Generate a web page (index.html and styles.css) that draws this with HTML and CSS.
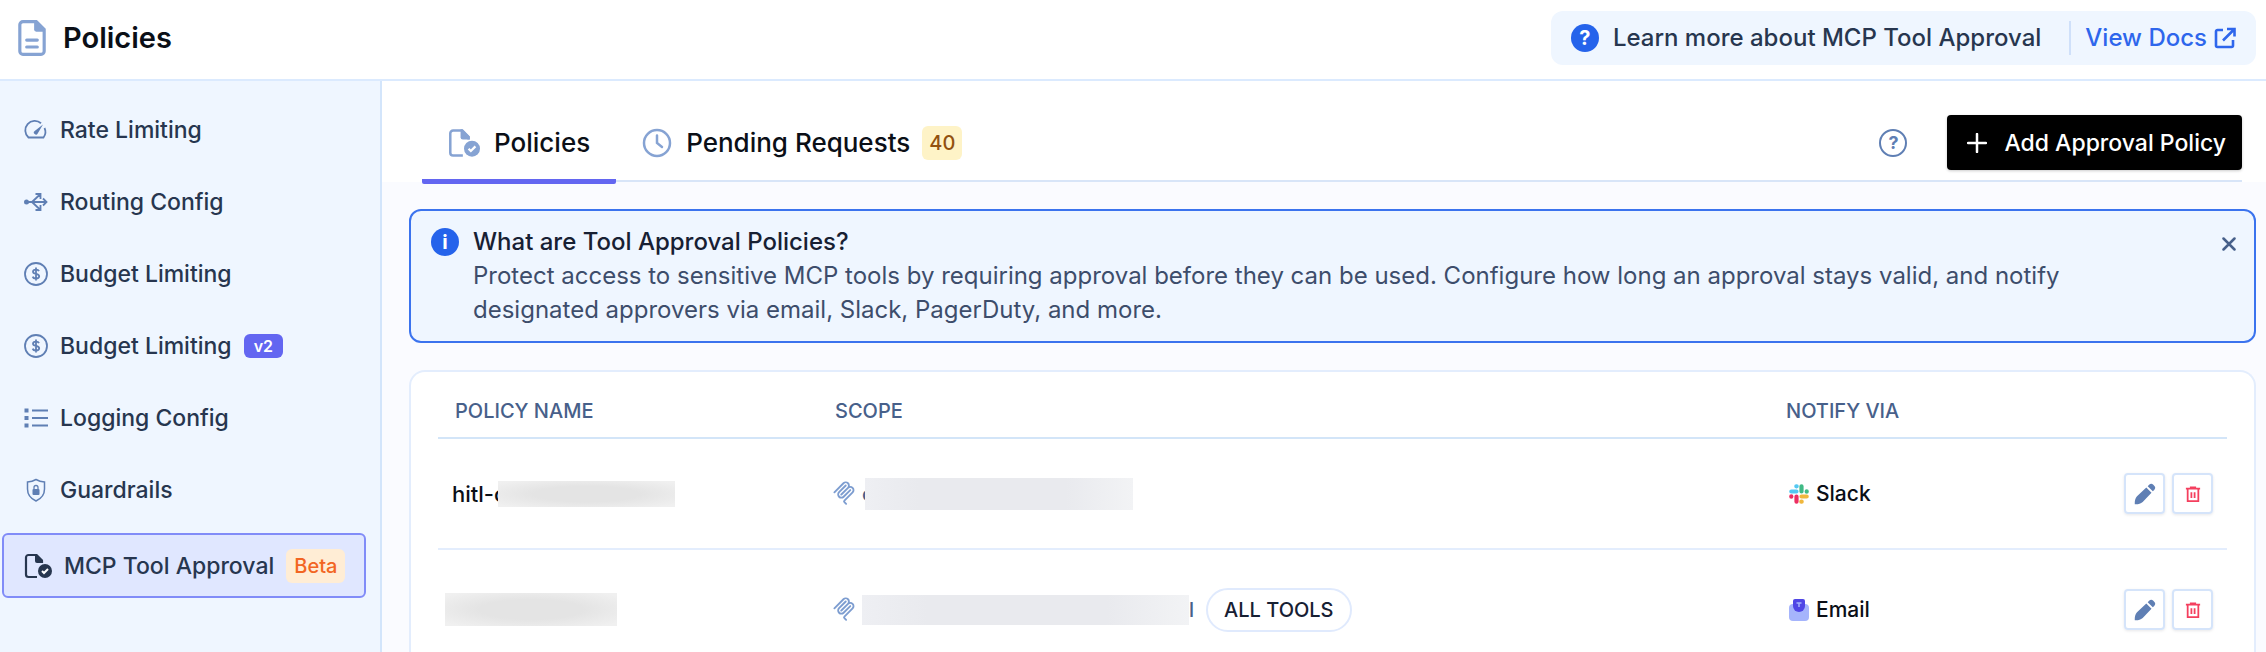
FILE: index.html
```html
<!DOCTYPE html>
<html lang="en">
<head>
    <meta charset="UTF-8">
    <meta name="viewport" content="width=device-width, initial-scale=1.0">
    <title>Policies</title>
    <link rel="stylesheet" href="styles.css">
</head>
<body>
    <!-- shared icon shapes -->
    <svg class="sprite" aria-hidden="true">
        <symbol id="doc-check" viewBox="0 0 28 26">
            <path d="M18 10V8l-6-6H4.500a2.500 2.500 0 0 0-2.500 2.500v17A2.500 2.500 0 0 0 4.500 24H13" fill="none" stroke="currentColor" stroke-width="2.200"/>
            <path d="M11 1h2l6 6v3h-6a2 2 0 0 1-2-2z" fill="currentColor"/>
            <circle cx="21" cy="18" r="7" fill="currentColor"/>
            <path class="check" d="M18 18l2 2 4-4" fill="none" stroke-width="2"/>
        </symbol>
        <symbol id="dollar" viewBox="0 0 24 24">
            <circle cx="12" cy="12" r="11" fill="none" stroke="currentColor" stroke-width="1.800"/>
            <path d="M15 9.200c-.4-1-1.500-1.600-3-1.600-1.800 0-3 .8-3 2.100 0 3 6.200 1.500 6.200 4.600 0 1.300-1.300 2.200-3.200 2.200-1.700 0-2.900-.7-3.300-1.900M12 5.500v13" fill="none" stroke="currentColor" stroke-width="1.800"/>
        </symbol>
        <symbol id="mcp" viewBox="0 0 180 195">
            <path d="M18 85L86 17c9-9 25-9 34 0s9 25 0 34L69 102M70 101l50-50c9-9 25-9 34 0l.5.5c9 9 9 25 0 34L93 147c-3 3-3 8 0 11l13 13M103 34L53 84c-9 9-9 25 0 34s25 9 34 0l50-50" fill="none" stroke="currentColor" stroke-width="14" stroke-linecap="round"/>
        </symbol>
        <symbol id="pencil" viewBox="0 0 22 22">
            <path d="M.8 21.200C.6 18.500 1 15.500 3 13.300L12.300 4.500l5.200 5.200L8.700 19c-2.200 2-5.200 2.400-7.900 2.200zM13.700 3.200l1.400-1.400a3 3 0 0 1 4.200 0l.9.9a3 3 0 0 1 0 4.200l-1.400 1.400z" fill="currentColor"/>
        </symbol>
        <symbol id="trash" viewBox="0 0 18 20">
            <path d="M1 4h16M5.500 2.500h7M3 4.500V18h12V4.500M7.200 8v6.500M10.800 8v6.500" fill="none" stroke="currentColor" stroke-width="2"/>
        </symbol>
    </svg>

    <header class="topbar">
        <h1 class="page-title">
            <svg class="title-icon" viewBox="0 0 26 34" aria-hidden="true">
                <path d="M5 1.500h12L24.500 9v20.500a3 3 0 0 1-3 3h-17a3 3 0 0 1-3-3v-25a3 3 0 0 1 3-3z" fill="none" stroke="currentColor" stroke-width="3"/>
                <path d="M15 1h3l7 7v3h-8a2 2 0 0 1-2-2z" fill="currentColor"/>
                <path d="M8 19h10M8 25.500h10" stroke="currentColor" stroke-width="3" stroke-linecap="round"/>
            </svg>
            Policies
        </h1>
        <div class="docs-banner">
            <span class="round-icon">?</span>
            <span class="docs-text">Learn more about MCP Tool Approval</span>
            <a class="docs-link" href="#">View Docs
                <svg width="22" height="22" viewBox="0 0 22 22" aria-hidden="true">
                    <path d="M9 3H3.500A1.500 1.500 0 0 0 2 4.500v14A1.500 1.500 0 0 0 3.500 20h14a1.500 1.500 0 0 0 1.500-1.500V13M13 2h7.500v7.500M20 2.500L9 13.500" fill="none" stroke="currentColor" stroke-width="2.600"/>
                </svg>
            </a>
        </div>
    </header>

    <div class="layout">
        <nav class="sidebar">
            <a class="nav-item" href="#">
                <svg width="24" height="24" viewBox="0 0 24 24" aria-hidden="true">
                    <path d="M17 5.300A9.300 9.300 0 0 0 4.500 19.500h15a9.300 9.300 0 0 0 1-9.500" fill="none" stroke="currentColor" stroke-width="1.800"/>
                    <path d="M19 6.500l-5.300 9a2 2 0 1 1-3-2.500z" fill="currentColor"/>
                </svg>
                Rate Limiting
            </a>
            <a class="nav-item" href="#">
                <svg width="24" height="24" viewBox="0 0 24 24" aria-hidden="true">
                    <circle cx="2.500" cy="12" r="2.500" fill="currentColor"/>
                    <path d="M3 12h19.500M19 8.500l3.500 3.500-3.500 3.500M8 12l8.500-8M8 12l8.500 8M11.500 4h5v5M11.500 20h5v-5" fill="none" stroke="currentColor" stroke-width="1.800"/>
                </svg>
                Routing Config
            </a>
            <a class="nav-item" href="#">
                <svg width="24" height="24" aria-hidden="true"><use href="#dollar"/></svg>
                Budget Limiting
            </a>
            <a class="nav-item" href="#">
                <svg width="24" height="24" aria-hidden="true"><use href="#dollar"/></svg>
                Budget Limiting
                <span class="tag tag-version">v2</span>
            </a>
            <a class="nav-item" href="#">
                <svg width="24" height="24" viewBox="0 0 24 24" aria-hidden="true">
                    <path d="M.5 2.500h4v4h-4zM.5 10h4v4h-4zM.5 17.500h4v4h-4z" fill="currentColor"/>
                    <path d="M8 4.500h16M8 12h16M8 19.500h16" stroke="currentColor" stroke-width="2"/>
                </svg>
                Logging Config
            </a>
            <a class="nav-item" href="#">
                <svg width="24" height="24" viewBox="0 0 24 24" aria-hidden="true">
                    <path d="M12 1.500c2.500 1.500 5 2.300 8.500 2.500v7c0 5.500-3 9.500-8.500 12-5.500-2.500-8.500-6.500-8.500-12V4C7 3.800 9.500 3 12 1.500z" fill="none" stroke="currentColor" stroke-width="1.500"/>
                    <rect x="8.500" y="11" width="7" height="6" rx="1" fill="currentColor"/>
                    <path d="M10 11V9.500a2 2 0 0 1 4 0V11" fill="none" stroke="currentColor" stroke-width="1.300"/>
                </svg>
                Guardrails
            </a>
            <a class="nav-item active" href="#">
                <svg width="28" height="26" aria-hidden="true"><use href="#doc-check"/></svg>
                MCP Tool Approval
                <span class="tag tag-beta">Beta</span>
            </a>
        </nav>

        <main class="content">
            <div class="tab-area">
                <div class="tab-row">
                    <div class="tabs" role="tablist">
                        <button class="tab selected" role="tab" aria-selected="true">
                            <svg width="32" height="30" aria-hidden="true"><use href="#doc-check"/></svg>
                            Policies
                        </button>
                        <button class="tab" role="tab" aria-selected="false">
                            <svg width="30" height="30" viewBox="0 0 30 30" aria-hidden="true">
                                <path d="M15 2a13 13 0 1 0 0 26 13 13 0 0 0 0-26zM15 7.500V15l5 4" fill="none" stroke="currentColor" stroke-width="2.500" stroke-linecap="round"/>
                            </svg>
                            Pending Requests
                            <span class="count">40</span>
                        </button>
                    </div>
                    <div class="tab-actions">
                        <button class="help" aria-label="Help">?</button>
                        <button class="add-button">
                            <svg width="20" height="20" viewBox="0 0 20 20" aria-hidden="true">
                                <path d="M10 1v18M1 10h18" stroke="currentColor" stroke-width="2.500" stroke-linecap="round"/>
                            </svg>
                            Add Approval Policy
                        </button>
                    </div>
                </div>
            </div>

            <section class="info">
                <span class="round-icon">i</span>
                <div class="info-body">
                    <h2>What are Tool Approval Policies?</h2>
                    <p>Protect access to sensitive MCP tools by requiring approval before they can be used. Configure how long an approval stays valid, and notify designated approvers via email, Slack, PagerDuty, and more.</p>
                </div>
                <button class="close" aria-label="Close">
                    <svg width="14" height="14" viewBox="0 0 14 14" aria-hidden="true">
                        <path d="M1.500 1.500l11 11M12.500 1.500l-11 11" stroke="currentColor" stroke-width="2.500" stroke-linecap="round"/>
                    </svg>
                </button>
            </section>

            <section class="card">
                <table class="policies">
                    <thead>
                        <tr>
                            <th class="col-name">Policy Name</th>
                            <th class="col-scope">Scope</th>
                            <th class="col-notify">Notify Via</th>
                            <th class="col-actions" aria-label="Actions"></th>
                        </tr>
                    </thead>
                    <tbody>
                        <tr>
                            <td>
                                <div class="cell name">hitl-c<span class="mask mask-name over"></span></div>
                            </td>
                            <td>
                                <div class="cell scope">
                                    <svg width="24" height="26" aria-hidden="true"><use href="#mcp"/></svg>
                                    c<span class="mask mask-scope over"></span>
                                </div>
                            </td>
                            <td>
                                <div class="cell notify">
                                    <svg width="20" height="20" viewBox="0 0 20 20" aria-hidden="true">
                                        <g fill="none" stroke-width="4.200" stroke-linecap="round">
                                            <path d="M2.300 7.500H7.500M7.300 2.300h.4" stroke="#53c8f2"/>
                                            <path d="M12.500 2.300V7.500M17.700 7.300v.4" stroke="#3fba85"/>
                                            <path d="M12.500 12.500h5.200M12.300 17.700h.4" stroke="#f0b73c"/>
                                            <path d="M7.500 12.500v5.200M2.300 12.300v.4" stroke="#ec2f62"/>
                                        </g>
                                    </svg>
                                    Slack
                                </div>
                            </td>
                            <td>
                                <div class="cell actions">
                                    <button class="icon-button" aria-label="Edit"><svg width="22" height="22" aria-hidden="true"><use href="#pencil"/></svg></button>
                                    <button class="icon-button delete" aria-label="Delete"><svg width="16" height="18" aria-hidden="true"><use href="#trash"/></svg></button>
                                </div>
                            </td>
                        </tr>
                        <tr>
                            <td class="flush">
                                <div class="cell name"><span class="mask mask-name tall"></span></div>
                            </td>
                            <td>
                                <div class="cell scope">
                                    <svg width="24" height="26" aria-hidden="true"><use href="#mcp"/></svg>
                                    <span class="mask mask-scope wide"></span>l
                                    <span class="pill">ALL TOOLS</span>
                                </div>
                            </td>
                            <td>
                                <div class="cell notify">
                                    <svg width="20" height="22" viewBox="0 0 20 22" aria-hidden="true">
                                        <rect y="5" width="20" height="17" rx="4" fill="#a5b4fc"/>
                                        <path d="M4 2a2 2 0 0 1 2-2h8a2 2 0 0 1 2 2v5a6 6 0 0 1-12 0z" fill="#4f46e5"/>
                                        <path d="M7.500 4h5M10 4v4" stroke="#a5b4fc" stroke-width="1.500"/>
                                    </svg>
                                    Email
                                </div>
                            </td>
                            <td>
                                <div class="cell actions">
                                    <button class="icon-button" aria-label="Edit"><svg width="22" height="22" aria-hidden="true"><use href="#pencil"/></svg></button>
                                    <button class="icon-button delete" aria-label="Delete"><svg width="16" height="18" aria-hidden="true"><use href="#trash"/></svg></button>
                                </div>
                            </td>
                        </tr>
                    </tbody>
                </table>
            </section>
        </main>
    </div>
</body>
</html>
```
FILE: styles.css
```css
* {
    box-sizing: border-box;
}

body {
    margin: 0;
    min-height: 100vh;
    display: flex;
    flex-direction: column;
    font-family: Inter, "Liberation Sans", sans-serif;
    font-size: 20px;
    font-weight: 500;
    color: #0f172a;
    background: #fff;
}

button {
    font: inherit;
    color: inherit;
    background: none;
    border: none;
    padding: 0;
    cursor: pointer;
}

svg {
    flex: none;
}

.sprite {
    position: absolute;
    width: 0;
    height: 0;
}

.check {
    stroke: #fff;
}

.topbar {
    display: flex;
    align-items: center;
    justify-content: space-between;
    height: 81px;
    padding: 0 10px 4px 18px;
    border-bottom: 2px solid #dbeafe;
}

.page-title {
    display: flex;
    align-items: center;
    gap: 17px;
    margin: 0;
    font-size: 29px;
    font-weight: 600;
    color: #0b0f17;
}

.title-icon {
    width: 28px;
    height: 36px;
    color: #86a3d3;
}

.docs-banner {
    display: flex;
    align-items: center;
    height: 54px;
    padding: 0 20px;
    border-radius: 12px;
    background: #eff6ff;
    color: #27364f;
    font-size: 24px;
}

.round-icon {
    display: grid;
    place-items: center;
    flex: none;
    width: 28px;
    height: 28px;
    border-radius: 50%;
    background: #2563eb;
    color: #fff;
    font-size: 20px;
    font-weight: 700;
    line-height: 28px;
}

.docs-text {
    margin: 0 28px 0 14px;
}

.docs-link {
    display: flex;
    align-items: center;
    gap: 7px;
    height: 34px;
    padding-left: 14px;
    border-left: 2px solid #cfe0fa;
    color: #2e66ec;
    text-decoration: none;
}

.layout {
    flex: 1;
    display: flex;
}

.sidebar {
    flex: none;
    width: 382px;
    padding: 13px 14px 40px 2px;
    border-right: 2px solid #d3e5fb;
    background: #eff6ff;
}

.nav-item {
    display: flex;
    align-items: center;
    gap: 12px;
    height: 72px;
    padding-left: 22px;
    color: #27364f;
    font-size: 23px;
    text-decoration: none;
}

.nav-item svg {
    color: #5f7fb4;
}

.nav-item.active {
    height: 65px;
    margin-top: 7px;
    padding-left: 20px;
    border: 2px solid #818cf8;
    border-radius: 6px;
    background: #e0e7ff;
}

.nav-item.active svg {
    color: #27364f;
}

.nav-item.active .check {
    stroke: #e0e7ff;
}

.tag {
    border-radius: 6px;
}

.tag-version {
    padding: 0 10px;
    background: #6366f1;
    color: #fff;
    font-size: 16px;
    font-weight: 600;
    line-height: 24px;
}

.tag-beta {
    padding: 0 8px;
    background: #ffedd5;
    color: #f26522;
    font-size: 20px;
    line-height: 34px;
}

.content {
    flex: 1;
    min-width: 0;
    background: #fafbff;
}

.tab-area {
    padding: 0 24px 0 40px;
    background: #fff;
}

.tab-row {
    display: flex;
    align-items: flex-end;
    justify-content: space-between;
    height: 101px;
    border-bottom: 2px solid #d8e5f8;
}

.tabs {
    display: flex;
    gap: 26px;
}

.tab {
    display: flex;
    align-items: center;
    gap: 14px;
    height: 80px;
    margin-bottom: -4px;
    padding-top: 2px;
    font-size: 26px;
    color: #0b0f17;
    border-bottom: 5px solid transparent;
}

.tab svg {
    color: #86a3d3;
}

.tab.selected {
    padding-left: 26px;
    padding-right: 26px;
    border-color: #6366f1;
    border-radius: 2px;
}

.count {
    margin-left: -2px;
    padding: 0 7px;
    border-radius: 6px;
    background: #fef3c7;
    color: #92510f;
    font-size: 20px;
    line-height: 34px;
}

.tab-actions {
    display: flex;
    align-items: center;
    gap: 40px;
    margin-bottom: 10px;
}

.help {
    width: 28px;
    height: 28px;
    border: 2px solid #5f7fb4;
    border-radius: 50%;
    color: #5f7fb4;
    font-size: 18px;
    font-weight: 700;
    line-height: 22px;
}

.add-button {
    display: flex;
    align-items: center;
    gap: 17px;
    height: 55px;
    padding: 0 16px 0 20px;
    border-radius: 4px;
    background: #000;
    color: #fff;
    font-size: 23px;
    box-shadow: 0 1px 3px rgba(0, 0, 0, 0.2);
}

.info {
    display: flex;
    align-items: flex-start;
    gap: 14px;
    margin: 27px 10px 0 27px;
    padding: 14px 18px 14px 20px;
    border: 2px solid #3b73ee;
    border-radius: 12px;
    background: #eff6ff;
    line-height: 34px;
}

.info .round-icon {
    margin-top: 3px;
}

.info-body {
    flex: 1;
    padding-right: 90px;
}

.info h2 {
    margin: 0;
    font-size: 24px;
    font-weight: 500;
    color: #172033;
}

.info p {
    margin: 0;
    font-size: 24px;
    font-weight: 400;
    color: #3d4d6b;
}

.close {
    display: flex;
    margin-top: 12px;
    color: #47608a;
}

.card {
    margin: 27px 10px 0 27px;
    padding: 12px 27px 0;
    border: 2px solid #e3edfd;
    border-bottom: none;
    border-radius: 16px 16px 0 0;
    background: #fff;
}

.policies {
    width: 100%;
    border-collapse: collapse;
    table-layout: fixed;
}

.policies th {
    height: 54px;
    padding: 0 17px;
    border-bottom: 2px solid #d3e5f8;
    color: #47608a;
    font-size: 20px;
    font-weight: 500;
    text-align: left;
    text-transform: uppercase;
}

.policies td {
    height: 111px;
    padding: 0 14px;
    border-bottom: 2px solid #e3edfd;
}

.policies tr:last-child td {
    height: 121px;
}

.policies td.flush {
    padding-left: 7px;
}

.col-name {
    width: 380px;
}

.col-notify {
    width: 340px;
}

.col-actions {
    width: 118px;
}

.cell {
    display: flex;
    align-items: center;
}

.name {
    font-size: 22px;
    color: #0b0f17;
}

.scope {
    color: #47608a;
}

.scope svg {
    margin-right: 6px;
    color: #7d9dd0;
}

.mask {
    background: radial-gradient(closest-side, #e4e4e4 60%, #f0f0f0 130%);
}

.mask.over {
    margin-left: -9px;
}

.mask-name {
    width: 177px;
    height: 26px;
}

.mask-name.tall {
    width: 172px;
    height: 33px;
}

.mask-scope {
    width: 268px;
    height: 32px;
    background: linear-gradient(90deg, #eeeff3, #e9eaee 20%, #e9eaee 75%, #f2f3f5);
}

.mask-scope.wide {
    width: 327px;
    height: 30px;
}

.pill {
    margin-left: 12px;
    padding: 0 16px;
    border: 2px solid #e0eafd;
    border-radius: 22px;
    color: #172033;
    line-height: 40px;
}

.notify {
    gap: 7px;
    padding-left: 6px;
    color: #0b0f17;
    font-size: 21px;
}

.actions {
    justify-content: flex-end;
    gap: 7px;
}

.icon-button {
    display: grid;
    place-items: center;
    flex: none;
    width: 41px;
    height: 41px;
    border: 2px solid #d5e4fa;
    border-radius: 4px;
    color: #5f7fb4;
    box-shadow: 0 1px 3px rgba(15, 23, 42, 0.1);
}

.icon-button.delete {
    color: #f43f5e;
}
```
